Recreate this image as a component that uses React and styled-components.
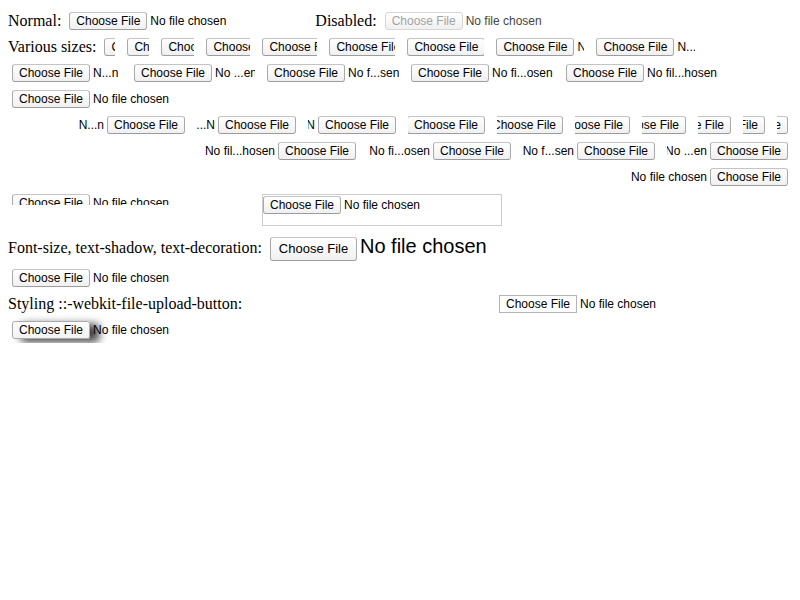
import React from "react";
import styled, { createGlobalStyle } from "styled-components";

const GlobalStyle = createGlobalStyle`
  body {
    margin: 8px;
    background: #ffffff;
    color: #000000;
    font: 16px "Liberation Serif", "Times New Roman", serif;
  }
`;

const SIZES = [11, 22, 33, 44, 55, 66, 77, 88, 99, 110, 121, 132, 143, 154, 165];

// truncated "No file chosen" strings, as the picture shows them
const LTR_NAMES = {
  88: "N",
  99: "N...",
  110: "N...n",
  121: "No ...en",
  132: "No f...sen",
  143: "No fi...osen",
  154: "No fil...hosen",
  165: "No file chosen",
};
const RTL_NAMES = { ...LTR_NAMES, 99: "...N" };

function FileInput({
  width = 238,
  height,
  name = "No file chosen",
  disabled,
  bordered,
  big,
  variant,
  overflow,
}) {
  return (
    <FileBox
      $width={width}
      $height={height}
      $bordered={bordered}
      $align={big ? "baseline" : "flex-start"}
      $overflow={overflow}
    >
      <UploadButton
        $disabled={disabled}
        $variant={variant}
        $width={big ? 87 : 78}
        $height={big ? 24 : 18}
        $size={big ? 13 : 12}
      >
        Choose File
      </UploadButton>
      {name && (
        <FileName $size={big ? 20 : 12} $disabled={disabled}>
          {name}
        </FileName>
      )}
    </FileBox>
  );
}

export default function App() {
  return (
    <Page>
      <GlobalStyle />
      <Row>
        <Label>Normal:</Label>
        <FileInput />
        <Label>Disabled:</Label>
        <FileInput disabled />
      </Row>

      <Row>
        <Label>Various sizes:</Label>
        {SIZES.slice(0, 9).map((w) => (
          <FileInput key={w} width={w} name={LTR_NAMES[w]} />
        ))}
      </Row>
      <Row>
        {SIZES.slice(9, 14).map((w) => (
          <FileInput key={w} width={w} name={LTR_NAMES[w]} />
        ))}
      </Row>
      <Row>
        <FileInput width={165} name={LTR_NAMES[165]} />
      </Row>

      <Row $rtl>
        {SIZES.slice(0, 10).map((w) => (
          <FileInput key={w} width={w} name={RTL_NAMES[w]} />
        ))}
      </Row>
      <Row $rtl>
        {SIZES.slice(10, 14).map((w) => (
          <FileInput key={w} width={w} name={RTL_NAMES[w]} />
        ))}
      </Row>
      <Row $rtl>
        <FileInput width={165} name={RTL_NAMES[165]} />
      </Row>

      <Row $align="flex-start" $height={40}>
        <FileInput height={11} />
        <FileInput width={240} height={32} bordered />
      </Row>

      <Row $align="baseline" $height={34}>
        <Label>Font-size, text-shadow, text-decoration:</Label>
        <FileInput big />
      </Row>
      <Row>
        <FileInput />
      </Row>

      <Row>
        <Label $width={483}>Styling ::-webkit-file-upload-button:</Label>
        <FileInput variant="square" />
      </Row>
      <Row>
        <FileInput variant="shadow" overflow="visible" />
      </Row>
    </Page>
  );
}

const Page = styled.div`
  display: flex;
  flex-direction: column;
`;

const Row = styled.div`
  display: flex;
  align-items: ${(p) => p.$align || "center"};
  gap: 4px;
  min-height: ${(p) => p.$height || 26}px;
  direction: ${(p) => (p.$rtl ? "rtl" : "ltr")};
`;

const Label = styled.span`
  flex-shrink: 0;
  width: ${(p) => (p.$width ? `${p.$width}px` : "auto")};
  white-space: nowrap;
  line-height: 18px;
`;

const FileBox = styled.span`
  display: inline-flex;
  align-items: ${(p) => p.$align};
  gap: 3px;
  flex-shrink: 0;
  box-sizing: border-box;
  width: ${(p) => p.$width}px;
  height: ${(p) => (p.$height ? `${p.$height}px` : "auto")};
  margin: 4px;
  padding-top: ${(p) => (p.$bordered ? "1px" : "0")};
  border: ${(p) => (p.$bordered ? "1px solid #cccccc" : "none")};
  overflow: ${(p) => p.$overflow || "hidden"};
`;

const buttonLook = {
  rounded: `
    border: 1px solid #aaaaaa;
    border-color: #c4c4c4 #a9a9a9 #9c9c9c;
    border-radius: 3px;
    background: linear-gradient(#ffffff, #f0f0f0);
  `,
  square: `
    border: 1px solid #b5b5b5;
    border-radius: 0;
    background: #ffffff;
  `,
  shadow: `
    border: 1px solid #aaaaaa;
    border-radius: 3px;
    background: linear-gradient(#ffffff, #f2f2f2);
    box-shadow: 9px 3px 8px rgba(0, 0, 0, 0.75);
  `,
};

const UploadButton = styled.span`
  display: inline-flex;
  align-items: center;
  justify-content: center;
  flex-shrink: 0;
  box-sizing: border-box;
  width: ${(p) => p.$width}px;
  height: ${(p) => p.$height}px;
  ${(p) => buttonLook[p.$variant || "rounded"]}
  ${(p) => p.$disabled && "border-color: #d6d6d6;"}
  color: ${(p) => (p.$disabled ? "#a3a3a3" : "#000000")};
  font: ${(p) => p.$size}px "Liberation Sans", Arial, sans-serif;
  white-space: nowrap;
  direction: ltr;
`;

const FileName = styled.span`
  flex-shrink: 0;
  direction: ltr;
  white-space: nowrap;
  line-height: ${(p) => (p.$size > 12 ? 24 : 18)}px;
  color: ${(p) => (p.$disabled ? "#444444" : "#000000")};
  font: ${(p) => p.$size}px "Liberation Sans", Arial, sans-serif;
  line-height: ${(p) => (p.$size > 12 ? 24 : 18)}px;
`;
